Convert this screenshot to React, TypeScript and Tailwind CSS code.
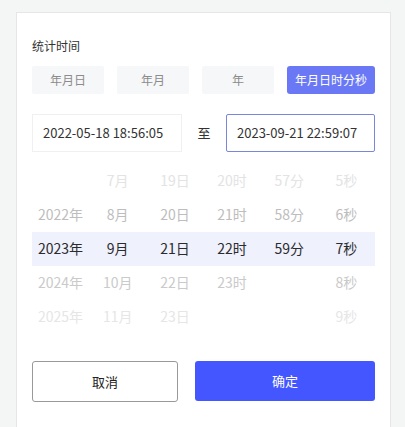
import React from "react";

const rows: string[][] = [
  ["", "7月", "19日", "20时", "57分", "5秒"],
  ["2022年", "8月", "20日", "21时", "58分", "6秒"],
  ["2023年", "9月", "21日", "22时", "59分", "7秒"],
  ["2024年", "10月", "22日", "23时", "", "8秒"],
  ["2025年", "11月", "23日", "", "", "9秒"],
];

const rowColor = ["text-[#e3e3e3]", "text-[#bdbdbd]", "text-[#2b2b2b]", "text-[#cacaca]", "text-[#e6e6e6]"];

export default function App() {
  return (
    <div
      className="w-[405px] h-[427px] bg-[#f4f6f5] pt-[12px] pl-[16px] pr-[14px] overflow-hidden"
      style={{ fontFamily: '"Noto Sans CJK SC", "Noto Sans", sans-serif' }}
    >
      <div className="bg-white border border-[#e6e6e6] border-b-0 h-[420px] px-[15px] pt-[24px]">
        <div className="text-[12px] leading-[18px] text-[#333]">统计时间</div>
        <div className="flex gap-[13px] mt-[11px]">
          <div className="w-[72px] h-[28px] bg-[#f6f7f8] rounded-[2px] flex items-center justify-center text-[12px] text-[#8c8c8c]">年月日</div>
          <div className="w-[72px] h-[28px] bg-[#f6f7f8] rounded-[2px] flex items-center justify-center text-[12px] text-[#8c8c8c]">年月</div>
          <div className="w-[72px] h-[28px] bg-[#f6f7f8] rounded-[2px] flex items-center justify-center text-[12px] text-[#8c8c8c]">年</div>
          <div className="w-[88px] h-[28px] bg-[#6b78f6] rounded-[3px] flex items-center justify-center text-[12px] text-white">年月日时分秒</div>
        </div>
        <div className="flex items-center mt-[20px]">
          <div className="w-[150px] h-[38px] border border-[#f0f0f0] flex items-center pl-[10px] text-[13px] text-[#333]">2022-05-18 18:56:05</div>
          <div className="w-[44px] text-center text-[13px] text-[#333]">至</div>
          <div className="w-[149px] h-[38px] border border-[#7b85d9] rounded-[2px] flex items-center pl-[10px] text-[13px] text-[#333]">2023-09-21 22:59:07</div>
        </div>
        <div className="mt-[12px]">
          {rows.map((r, i) => (
            <div
              key={i}
              className={`grid grid-cols-6 h-[34px] items-center text-[14px] leading-[20px] pb-[2px] ${rowColor[i]} ${i === 2 ? "bg-[#eff1fd]" : ""}`}
            >
              {r.map((c, j) => (
                <div key={j} className="text-center">{c}</div>
              ))}
            </div>
          ))}
        </div>
        <div className="flex gap-[17px] mt-[27px]">
          <div className="w-[146px] h-[41px] border border-[#999] rounded-[3px] flex items-center justify-center text-[13px] text-[#222]">取消</div>
          <div className="w-[180px] h-[40px] bg-[#4456ff] rounded-[3px] flex items-center justify-center text-[13px] text-white">确定</div>
        </div>
      </div>
    </div>
  );
}
